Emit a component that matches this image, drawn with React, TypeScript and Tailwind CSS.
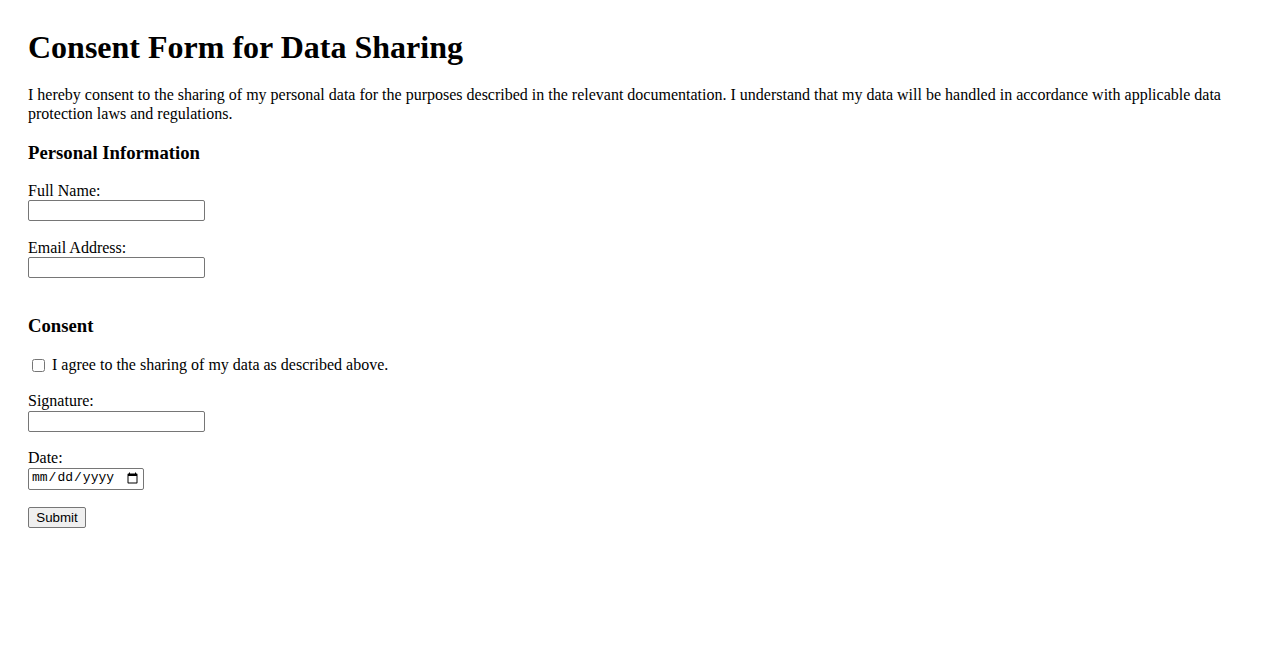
import React from "react";

export default function App() {
  const inputCls =
    "block w-[177px] h-[21px] border border-[#767676] rounded-[2px] bg-white px-[2px] text-[13.33px] font-['Liberation_Sans',sans-serif]";
  return (
    <div className="min-h-screen bg-white text-black font-['Liberation_Serif',serif] px-[28px] pt-[29px] text-[16px] leading-[1.15]">
      <h1 className="text-[32px] font-bold mb-[20.4px]">Consent Form for Data Sharing</h1>
      <p className="mb-[16px]">
        I hereby consent to the sharing of my personal data for the purposes described in the relevant documentation. I
        understand that my data will be handled in accordance with applicable data protection laws and regulations.
      </p>
      <form onSubmit={(e) => e.preventDefault()}>
        <h3 className="text-[18.72px] font-bold mt-[18.72px] mb-[18.72px]">Personal Information</h3>
        <div className="mb-[17.6px]">
          <label htmlFor="name" className="block">Full Name:</label>
          <input id="name" type="text" className={inputCls} />
        </div>
        <div className="mb-[17.6px]">
          <label htmlFor="email" className="block">Email Address:</label>
          <input id="email" type="email" className={inputCls} />
        </div>
        <h3 className="text-[18.72px] font-bold mt-[37px] mb-[18.72px]">Consent</h3>
        <div className="mt-[1px] mb-[17.6px] flex items-center">
          <input
            id="agree"
            type="checkbox"
            className="w-[13px] h-[13px] ml-[4px] mr-[7px] my-[3px] appearance-auto accent-white"
          />
          <label htmlFor="agree">I agree to the sharing of my data as described above.</label>
        </div>
        <div className="mb-[17.6px]">
          <label htmlFor="sig" className="block">Signature:</label>
          <input id="sig" type="text" className={inputCls} />
        </div>
        <div className="mb-[17.6px]">
          <label htmlFor="date" className="block">Date:</label>
          <input
            id="date"
            type="date"
            className="block w-[116px] h-[22px] border border-[#767676] rounded-[2px] bg-white px-[2px] text-[13px] font-['Liberation_Mono',monospace]"
          />
        </div>
        <button
          type="submit"
          className="w-[58px] h-[21px] border border-[#767676] rounded-[2px] bg-[#efefef] text-[13.33px] font-['Liberation_Sans',sans-serif] leading-none"
        >
          Submit
        </button>
      </form>
    </div>
  );
}
